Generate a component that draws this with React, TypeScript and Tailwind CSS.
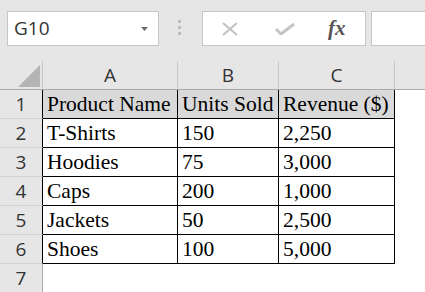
import React from 'react';

const rows: [string, string, string][] = [
  ['Product Name', 'Units Sold', 'Revenue ($)'],
  ['T-Shirts', '150', '2,250'],
  ['Hoodies', '75', '3,000'],
  ['Caps', '200', '1,000'],
  ['Jackets', '50', '2,500'],
  ['Shoes', '100', '5,000'],
];

const serif = { fontFamily: '"Liberation Serif", "Times New Roman", serif' };
const ui = { fontFamily: '"Open Sans", "Noto Sans", sans-serif' };

const RowHead: React.FC<{ n: number; last?: boolean }> = ({ n, last }) => (
  <div
    className={`w-[43px] shrink-0 border-r flex items-end justify-center text-[19px] leading-[28px] text-[#333] ${last ? 'border-[#ababab]' : 'border-black border-b border-b-[#d2d2d2]'}`}
    style={ui}
  >
    {n}
  </div>
);

const Toolbar: React.FC = () => (
  <div className="h-[61px] shrink-0 flex items-start pt-[11px] pl-[7px]">
    <div className="w-[152px] h-[35px] bg-white border border-[#c6c6c6] flex items-center justify-between pl-[6px] pr-[10px]">
      <span className="text-[19px] text-[#333]" style={ui}>G10</span>
      <svg width="7" height="4" viewBox="0 0 7 4"><path d="M0 0h7L3.5 4z" fill="#6b6b6b" /></svg>
    </div>
    <div className="ml-[19px] mt-[9px] flex flex-col gap-[3px]">
      <div className="w-[3px] h-[3px] bg-[#bdbdbd]" />
      <div className="w-[3px] h-[3px] bg-[#bdbdbd]" />
      <div className="w-[3px] h-[3px] bg-[#bdbdbd]" />
    </div>
    <div className="ml-[21px] w-[164px] h-[35px] bg-white border border-[#c6c6c6] flex items-center">
      <svg className="ml-[18px]" width="18" height="14" viewBox="0 0 18 14">
        <path d="M2 1l14 12M16 1L2 13" stroke="#c2c2c2" strokeWidth="2" fill="none" />
      </svg>
      <svg className="ml-[36px]" width="20" height="12" viewBox="0 0 20 12">
        <path d="M1 6l5 5L19 1" stroke="#c4c4c4" strokeWidth="3" fill="none" />
      </svg>
      <span className="ml-[33px] italic text-[21px] text-[#555] font-semibold leading-none" style={serif}>fx</span>
    </div>
    <div className="ml-[5px] flex-1 h-[35px] bg-white border border-[#c6c6c6] border-r-0" />
  </div>
);

export default function App() {
  return (
    <div className="w-[425px] h-[292px] bg-[#e6e6e6] overflow-hidden flex flex-col">
      <Toolbar />
      <div className="flex h-[29px] border-b border-[#ababab]">
        <div className="w-[43px] shrink-0 border-r border-[#c8c8c8] relative">
          <svg className="absolute left-[18px] top-[4px]" width="22" height="22" viewBox="0 0 22 22">
            <path d="M22 0V22H0z" fill="#b4b4b4" />
          </svg>
        </div>
        {['A', 'B', 'C'].map((c, i) => (
          <div
            key={c}
            className={`${['w-[135px]', 'w-[101px]', 'w-[116px]'][i]} shrink-0 border-r border-[#c8c8c8] flex items-end justify-center text-[19px] leading-[28px] text-[#333]`}
            style={ui}
          >
            {c}
          </div>
        ))}
        <div className="flex-1" />
      </div>
      {rows.map((r, i) => (
        <div key={i} className="flex h-[29px]">
          <RowHead n={i + 1} />
          {r.map((v, j) => (
            <div
              key={j}
              className={`${['w-[135px]', 'w-[101px]', 'w-[116px]'][j]} shrink-0 border-r border-b border-black pl-[4px] text-[21.5px] leading-[28px] text-black whitespace-nowrap overflow-hidden ${i === 0 ? 'bg-[#d9d9d9]' : 'bg-white'}`}
              style={serif}
            >
              {v}
            </div>
          ))}
          <div className="flex-1 bg-white" />
        </div>
      ))}
      <div className="flex flex-1">
        <RowHead n={7} last />
        <div className="flex-1 bg-white" />
      </div>
    </div>
  );
}
